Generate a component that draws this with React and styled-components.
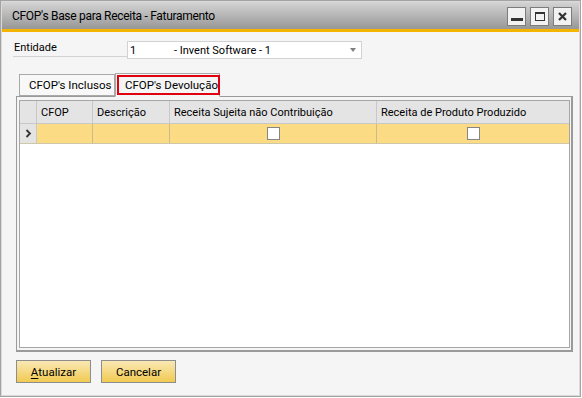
import React from 'react';
import styled, { createGlobalStyle } from 'styled-components';

const GlobalStyle = createGlobalStyle`
  html, body {
    margin: 0;
    padding: 0;
    background: #ffffff;
  }
  body {
    font-family: Roboto, "Noto Sans", sans-serif;
    font-size: 11px;
    color: #000;
  }
`;

const columns = [
  { key: 'cfop', label: 'CFOP', width: 56 },
  { key: 'desc', label: 'Descrição', width: 77 },
  { key: 'sujeita', label: 'Receita Sujeita não Contribuição', width: 207, check: true },
  { key: 'produzido', label: 'Receita de Produto Produzido', width: 192, check: true },
];

const App = () => {
  return (
    <>
      <GlobalStyle />
      <Window>
        <TitleBar>
          <Title>CFOP's Base para Receita - Faturamento</Title>
          <Controls>
            <CtrlButton aria-label="minimizar">
              <MinBar />
            </CtrlButton>
            <CtrlButton aria-label="maximizar">
              <MaxBox />
            </CtrlButton>
            <CtrlButton aria-label="fechar">
              <svg width="11" height="11" viewBox="0 0 11 11">
                <path d="M2 2 L9 9 M9 2 L2 9" stroke="#333" strokeWidth="2.2" />
              </svg>
            </CtrlButton>
          </Controls>
        </TitleBar>
        <Accent />
        <Body>
          <FieldRow>
            <FieldLabel>Entidade</FieldLabel>
            <Combo>
              <ComboCode>1</ComboCode>
              <ComboText>- Invent Software - 1</ComboText>
              <ComboArrow />
            </Combo>
          </FieldRow>

          <Tabs>
            <Tab>CFOP's Inclusos</Tab>
            <Tab $active>
              <ActiveMark>CFOP's Devolução</ActiveMark>
            </Tab>
          </Tabs>

          <Panel>
            <Grid>
              <HeadRow>
                <RowHandle />
                {columns.map(c => (
                  <HeadCell key={c.key} style={{ width: c.width }}>
                    {c.label}
                  </HeadCell>
                ))}
              </HeadRow>
              <DataRow>
                <RowHandle $data>
                  <svg width="7" height="9" viewBox="0 0 7 9">
                    <path d="M1.5 1 L5 4.5 L1.5 8" fill="none" stroke="#333" strokeWidth="1.8" />
                  </svg>
                </RowHandle>
                {columns.map(c => (
                  <DataCell key={c.key} style={{ width: c.width }}>
                    {c.check && <CheckBox />}
                  </DataCell>
                ))}
              </DataRow>
            </Grid>
          </Panel>

          <ButtonRow>
            <ActionButton>
              <u>A</u>tualizar
            </ActionButton>
            <ActionButton>Cancelar</ActionButton>
          </ButtonRow>
        </Body>
      </Window>
    </>
  );
};

export default App;

const Window = styled.div`
  width: 581px;
  height: 397px;
  box-sizing: border-box;
  border: 1px solid #a3a3a3;
  box-shadow: inset 0 0 0 1px #dadada;
  background: #f5f5f5;
  display: flex;
  flex-direction: column;
`;

const TitleBar = styled.div`
  height: 27px;
  margin: 1px 1px 0;
  background: linear-gradient(#d4d4d4, #979797);
  display: flex;
  align-items: center;
  justify-content: space-between;
  padding: 0 7px 0 10px;
`;

const Title = styled.div`
  font-size: 12px;
  letter-spacing: -0.3px;
  color: #000;
`;

const Controls = styled.div`
  display: flex;
  gap: 4px;
  margin-top: 2px;
`;

const CtrlButton = styled.div`
  width: 17px;
  height: 17px;
  border: 1px solid #7c7c7c;
  background: #f2f2f2;
  display: flex;
  align-items: center;
  justify-content: center;
`;

const MinBar = styled.div`
  width: 12px;
  height: 3px;
  background: #333;
  margin-top: 5px;
`;

const MaxBox = styled.div`
  width: 8px;
  height: 6px;
  border: 1px solid #333;
  border-top-width: 2px;
`;

const Accent = styled.div`
  height: 3px;
  margin: 0 1px;
  background: #f4b400;
`;

const Body = styled.div`
  flex: 1;
  display: flex;
  flex-direction: column;
  padding: 9px 7px 13px 15px;
  white-space: nowrap;
`;

const FieldRow = styled.div`
  display: flex;
  align-items: flex-start;
  height: 17px;
`;

const FieldLabel = styled.div`
  width: 113px;
  height: 15px;
  border-bottom: 1px solid #d2d2d2;
  line-height: 13px;
  margin-left: -3px;
  padding-left: 1px;
`;

const Combo = styled.div`
  position: relative;
  width: 233px;
  height: 15px;
  border: 1px solid #d2d2d2;
  background: #fff;
  display: flex;
  align-items: center;
  padding-top: 1px;
`;

const ComboCode = styled.span`
  width: 44px;
  padding-left: 2px;
`;

const ComboText = styled.span``;

const ComboArrow = styled.span`
  position: absolute;
  right: 5px;
  top: 6px;
  border-left: 3px solid transparent;
  border-right: 3px solid transparent;
  border-top: 4px solid #808080;
`;

const Tabs = styled.div`
  display: flex;
  align-items: flex-end;
  margin-top: 14px;
  padding-left: 3px;
  height: 24px;
`;

const Tab = styled.div`
  box-sizing: border-box;
  height: ${p => (p.$active ? '24px' : '22px')};
  padding: ${p => (p.$active ? '1px' : '0 9px')};
  border: 1px solid #a9a9a9;
  border-bottom: ${p => (p.$active ? '1px solid #f5f5f5' : '1px solid #a9a9a9')};
  background: ${p => (p.$active ? '#f5f5f5' : '#f8f8f8')};
  margin-bottom: ${p => (p.$active ? '-1px' : '0')};
  display: flex;
  align-items: center;
  position: relative;
  z-index: ${p => (p.$active ? 1 : 0)};
  width: ${p => (p.$active ? '105px' : '96px')};
  font-size: 11.5px;
`;

const ActiveMark = styled.div`
  flex: 1;
  height: 100%;
  box-sizing: border-box;
  border: 2px solid #e0000f;
  display: flex;
  align-items: center;
  padding-left: 6px;
`;

const Panel = styled.div`
  flex: 1;
  border: 1px solid #9a9a9a;
  border-right-width: 2px;
  border-bottom-width: 2px;
  padding: 3px 2px 2px 2px;
  background: #f5f5f5;
  display: flex;
`;

const Grid = styled.div`
  flex: 1;
  border: 1px solid #a6a6a6;
  background: #fff;
`;

const HeadRow = styled.div`
  display: flex;
  height: 22px;
  background: #e4e4e4;
  border-bottom: 1px solid #c8c8c8;
`;

const RowHandle = styled.div`
  width: 16px;
  flex: none;
  background: #e4e4e4;
  border-right: 1px solid #c8c8c8;
  display: flex;
  align-items: center;
  justify-content: center;
`;

const HeadCell = styled.div`
  box-sizing: border-box;
  flex: none;
  border-right: 1px solid #c8c8c8;
  padding-left: 4px;
  display: flex;
  align-items: center;
  &:last-child {
    border-right: none;
    flex: 1;
  }
`;

const DataRow = styled.div`
  display: flex;
  height: 19px;
  background: #fbdc84;
  border-bottom: 1px solid #cfc7a8;
`;

const DataCell = styled.div`
  box-sizing: border-box;
  flex: none;
  border-right: 1px solid #c9bc8a;
  display: flex;
  align-items: center;
  justify-content: center;
  &:last-child {
    border-right: none;
    flex: 1;
  }
`;

const CheckBox = styled.div`
  width: 11px;
  height: 11px;
  border: 1px solid #858585;
  background: #fff;
`;

const ButtonRow = styled.div`
  display: flex;
  gap: 10px;
  margin-top: 8px;
`;

const ActionButton = styled.div`
  box-sizing: border-box;
  width: 75px;
  height: 23px;
  border: 1px solid #8d8d8d;
  background: linear-gradient(#f9e8b4, #f1ca52);
  display: flex;
  align-items: center;
  justify-content: center;
  font-size: 11.5px;
  u {
    text-underline-offset: 2px;
  }
`;
